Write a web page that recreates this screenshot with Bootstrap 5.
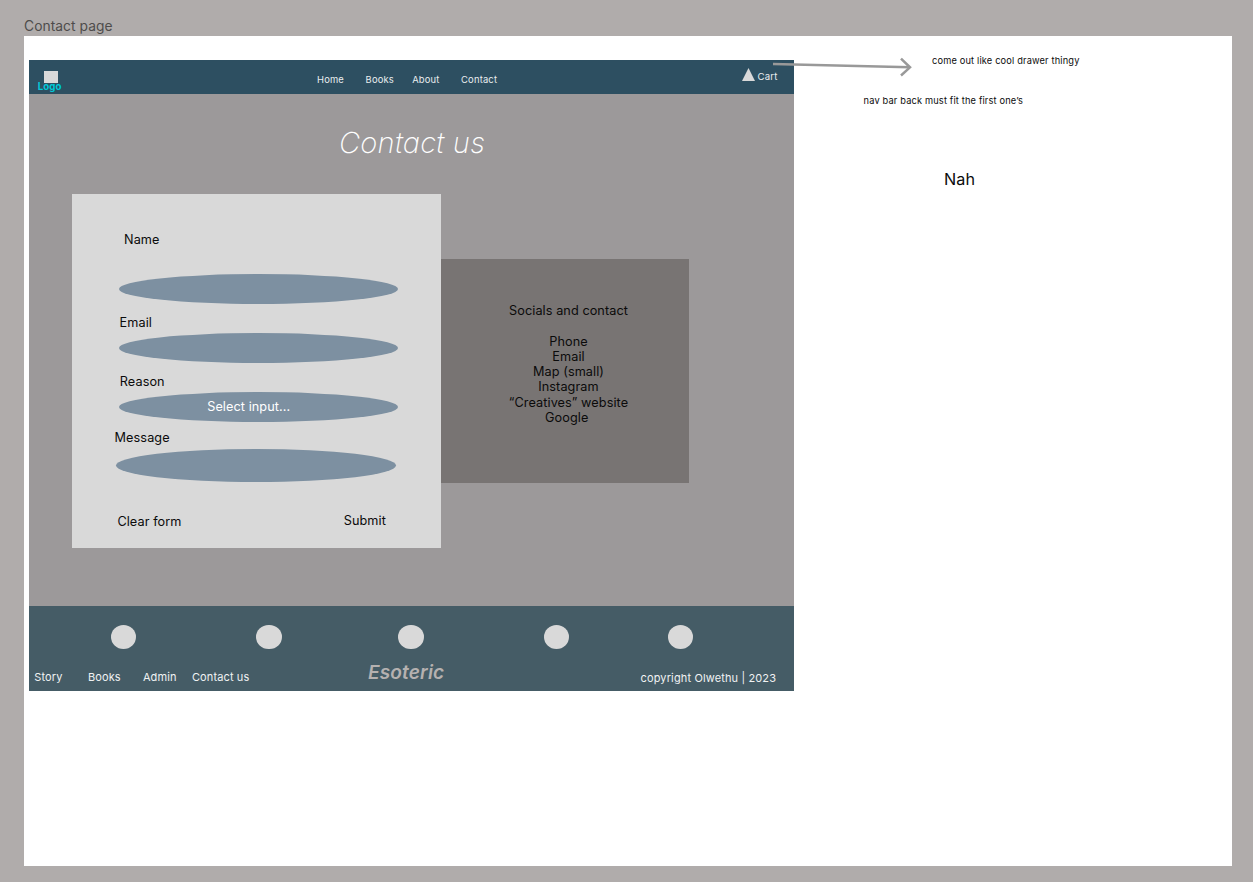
<!DOCTYPE html>
<html lang="en">
<head>
<meta charset="utf-8">
<title>Contact page</title>
<link href="https://cdn.jsdelivr.net/npm/bootstrap@5.3.0/dist/css/bootstrap.min.css" rel="stylesheet">
<style>
body { background: #b0acab; font-family: Inter, "Liberation Sans", sans-serif; font-size: 12.7px; letter-spacing: .07px; line-height: 16px; color: #0b0b0b; width: 1253px; height: 882px; overflow: hidden; }
.frame-title { padding: 18px 0 2px 24px; font-size: 13.8px; letter-spacing: .05px; color: #4e4c4b; height: 36px; }
.artboard { margin-left: 24px; width: 1208px; height: 830px; background: #fff; }
.site { width: 765px; height: 631px; margin: 24px 0 0 5px; background: #9c999a; }
.topbar { height: 34px; background: #2d4f61; font-size: 9.4px; letter-spacing: .18px; color: #e9edef; display: grid; grid-template-columns: 288px 48.6px 46.6px 48.9px 281px 1fr; }
.topbar > * { margin-top: 12px; }
.topbar .brand { margin: 11px 0 0 8.8px; line-height: 12px; letter-spacing: .05px; color: #00c9d8; font-weight: 700; font-size: 9.7px; }
.brand i { display: block; width: 14px; height: 12px; margin: 0 0 -2px 6.2px; background: #d9d9d9; }
.brand span { position: relative; display: block; }
.topbar .cart { margin-top: 8px; display: flex; font-size: 9.6px; }
.cart svg { margin-right: 2.5px; }
.cart span { padding-top: 1px; }
.page-title { font: italic 200 29.1px/36px Inter, sans-serif; letter-spacing: .22px; color: #fff; margin: 31px 0 33px 310px; }
.form-panel { width: 369px; height: 354px; margin-left: 43px; background: #d9d9d9; }
.oval { width: 279.5px; height: 30px; border-radius: 50%; background: #7d90a1; margin-left: 46.5px; color: #fff; }
.oval-select { padding: 7px 0 0 88.7px; }
.oval-message { height: 33px; margin-left: 44px; }
.label-name { margin: 38px 0 26px 52px; }
.label-email { margin: 11px 0 2px 47.6px; }
.label-reason { margin: 11px 0 2px 47.8px; }
.label-message { margin: 8px 0 3px 42.6px; }
.form-actions { margin: 31px 0 0 45.4px; }
.form-actions span:first-child { width: 226.3px; padding-top: 1px; }
.socials { width: 248px; height: 224px; margin-top: 65px; padding: 44.4px 0 0 7px; background: #787473; line-height: 15.2px; text-align: center; }
.bottom { height: 85px; background: #455c66; color: #f0f2f3; margin-top: 58px; padding-top: 18.5px; font-size: 11px; letter-spacing: .13px; }
.dots { height: 24.5px; display: grid; grid-template-columns: 145.7px 141.7px 145.7px 124px 26px; margin-left: 81.6px; }
.dots i { width: 25.6px; height: 24.5px; border-radius: 50%; background: #d9d9d9; }
.links { display: grid; grid-template-columns: 53.6px 55px 49px 176px 272.7px 1fr; margin-left: 5.3px; padding-top: 11px; white-space: nowrap; }
.links span { margin-top: 9px; }
.links .wordmark { margin-top: 0; font: italic 600 19.1px/24px Inter, sans-serif; color: #b5b1b0; }
.links .legal { margin-top: 10px; }
.notes { position: relative; font-size: 9.25px; letter-spacing: .16px; width: 438px; }
.arrow { position: absolute; left: -22px; top: 20px; }
.note-drawer { margin: 17px 0 0 138px; }
.note-nav { margin: 24px 0 0 69.6px; }
.note-nah { margin: 60px 0 0 150px; font-size: 16.2px; line-height: 20px; }
</style>
</head>
<body>
<div class="frame-title">Contact page</div>
<main class="artboard d-flex">
  <div class="site flex-shrink-0">
    <nav class="topbar">
      <div class="brand"><i></i><span>Logo</span></div>
      <span>Home</span><span>Books</span><span>About</span><span>Contact</span>
      <div class="cart"><svg width="13" height="13" viewBox="0 0 13 13"><path d="M6.500 0 13 13H0Z" fill="#d9d9d9"/></svg><span>Cart</span></div>
    </nav>
    <h1 class="page-title">Contact us</h1>
    <div class="d-flex">
      <form class="form-panel">
        <div class="label-name">Name</div>
        <div class="oval"></div>
        <div class="label-email">Email</div>
        <div class="oval"></div>
        <div class="label-reason">Reason</div>
        <div class="oval oval-select">Select input...</div>
        <div class="label-message">Message</div>
        <div class="oval oval-message"></div>
        <div class="form-actions d-flex"><span>Clear form</span><span>Submit</span></div>
      </form>
      <div class="socials">Socials and contact<br><br>Phone<br>Email<br>Map (small)<br>Instagram<br>“Creatives” website<br>Google&nbsp;</div>
    </div>
    <footer class="bottom">
      <div class="dots"><i></i><i></i><i></i><i></i><i></i></div>
      <div class="links"><span>Story</span><span>Books</span><span>Admin</span><span>Contact us</span><span class="wordmark">Esoteric</span><span class="legal">copyright Olwethu | 2023</span></div>
    </footer>
  </div>
  <aside class="notes">
    <svg class="arrow" width="142" height="24" viewBox="0 0 142 24" fill="none" stroke="#999" stroke-width="2.5"><path d="M1 8 138 11.300M129 2.700 138 11.300 129 19.500"/></svg>
    <div class="note-drawer">come out like cool drawer thingy</div>
    <div class="note-nav">nav bar back must fit the first one’s</div>
    <div class="note-nah">Nah</div>
  </aside>
</main>
<script src="https://cdn.jsdelivr.net/npm/bootstrap@5.3.0/dist/js/bootstrap.bundle.min.js"></script>
</body>
</html>
